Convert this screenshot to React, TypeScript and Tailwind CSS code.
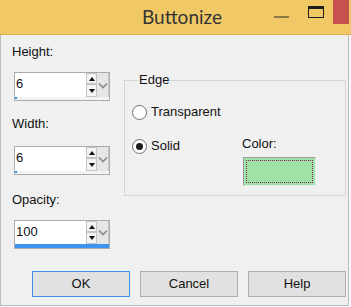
import React from 'react';

const Spin = ({ value, full }: { value: string; full?: boolean }) => {
    return (
        <div className="ml-[13px] w-[96px] h-[29px] border border-[#ababab] flex flex-col bg-[#f3f3f3]">
            <div className={full ? 'flex h-[23px]' : 'flex h-[24px]'}>
                <div className="flex-1 bg-white pl-[1px] pt-[3px]">{value}</div>
                <div className="w-[11px] flex flex-col bg-white">
                    <div className="h-[11px] border border-[#c4c4c4] bg-[#f4f4f4] flex items-center justify-center">
                        <span className="w-0 h-0 border-l-[3.5px] border-r-[3.5px] border-b-[4px] border-l-transparent border-r-transparent border-b-[#111]" />
                    </div>
                    <div className="flex-1 border border-[#c4c4c4] bg-[#f4f4f4] flex items-center justify-center">
                        <span className="w-0 h-0 border-l-[3.5px] border-r-[3.5px] border-t-[4px] border-l-transparent border-r-transparent border-t-[#111]" />
                    </div>
                </div>
                <div className="w-[12px] bg-[#e6e6e6] border-r border-[#c8c8c8] flex items-center justify-center">
                    <svg width="10" height="7" viewBox="0 0 10 7">
                        <path d="M1 1.5 L5 5.5 L9 1.5" fill="none" stroke="#8a8a8a" strokeWidth="1.6" />
                    </svg>
                </div>
            </div>
            <div className="flex-1 flex">
                {full ? (
                    <div className="w-full bg-[#3b95ee]" />
                ) : (
                    <div className="w-[2px] h-[2px] bg-[#3b95ee]" />
                )}
            </div>
        </div>
    );
};

const Radio = ({ label, checked }: { label: string; checked?: boolean }) => {
    return (
        <div className="flex items-center h-[16px]">
            <span className="w-[15px] h-[15px] rounded-full border border-[#707070] bg-white flex items-center justify-center">
                {checked && <span className="w-[7px] h-[7px] rounded-full bg-[#1b1b1b]" />}
            </span>
            <span className="ml-[4px]">{label}</span>
        </div>
    );
};

const App = () => {
    return (
        <div className="w-[351px] h-[307px] bg-[#f8f8f8] font-['Liberation_Sans',Arial,sans-serif] text-[13px] leading-[16px] text-[#111]">
            <div className="h-[35px] bg-[#f0c866] border-b border-[#dbb24f] flex items-start">
                <div className="ml-[142px] mt-[5px] font-['Lato',sans-serif] text-[19px] leading-[23px] text-[#333]">
                    Buttonize
                </div>
                <div className="ml-auto mr-[2px] flex items-start">
                    <div className="mt-[16px] w-[15px] h-[2px] bg-[#8a7845]" />
                    <div className="ml-[19px] mt-[6px] w-[16px] h-[12px] border-[1.5px] border-t-[3px] border-[#1e1e1e]" />
                    <div className="ml-[9px] w-[16px] h-[24px] bg-[#c8504e]" />
                </div>
            </div>
            <div className="w-[349px] h-[271px] border-l border-r border-b border-[#bcbcbc] bg-[#f0f0f0] flex flex-col">
                <div className="flex pt-[9px]">
                    <div className="w-[123px] flex flex-col">
                        <div className="pl-[11px]">Height:</div>
                        <div className="mt-[12px]">
                            <Spin value="6" />
                        </div>
                        <div className="pl-[11px] mt-[15px]">Width:</div>
                        <div className="mt-[14px]">
                            <Spin value="6" />
                        </div>
                        <div className="pl-[11px] mt-[17px]">Opacity:</div>
                        <div className="mt-[12px]">
                            <Spin value="100" full />
                        </div>
                    </div>
                    <fieldset className="mt-[28px] w-[222px] h-[124px] border border-[#d5d5d5] pl-[7px]">
                        <legend className="ml-[6px] px-[1px]">Edge</legend>
                        <div className="mt-[16px]">
                            <Radio label="Transparent" />
                        </div>
                        <div className="flex items-start mt-[16px]">
                            <div className="w-[110px] mt-[2px]">
                                <Radio label="Solid" checked />
                            </div>
                            <div className="flex flex-col">
                                <div>Color:</div>
                                <div className="ml-[1px] mt-[5px] w-[73px] h-[29px] border border-[#9c9c9c] border-r-[#e8e8e8] border-b-[#e8e8e8] bg-[#a0e3a7] p-[2px]">
                                    <div className="h-full border border-dotted border-[#8a1f4e]" />
                                </div>
                            </div>
                        </div>
                    </fieldset>
                </div>
                <div className="flex gap-[10px] pl-[31px] mt-[22px]">
                    <button className="w-[98px] h-[26px] bg-[#e1e1e1] border border-[#3c8fe6]">OK</button>
                    <button className="w-[98px] h-[26px] bg-[#e1e1e1] border border-[#adadad]">Cancel</button>
                    <button className="w-[98px] h-[26px] bg-[#e1e1e1] border border-[#adadad]">Help</button>
                </div>
            </div>
        </div>
    );
};

export default App;
